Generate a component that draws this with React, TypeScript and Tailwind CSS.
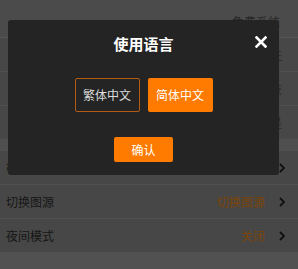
const font = "font-['Noto_Sans_CJK_SC','Noto_Sans',sans-serif]";

function Chevron() {
  return (
    <svg width="6" height="10" viewBox="0 0 6 10" className="shrink-0">
      <path d="M1 1l4 4-4 4" fill="none" stroke="#101010" strokeWidth="1.8" />
    </svg>
  );
}

function Row({ label, value, chevron = true, h = "h-[34px]" }: { label: string; value?: string; chevron?: boolean; h?: string }) {
  return (
    <div className={`${h} flex items-center justify-between pl-[6px] pr-[13px] bg-[#474747] border-b border-[#515151]`}>
      <span className="text-[12px] text-[#161616]">{label}</span>
      <div className="flex items-center gap-[14px]">
        {value && <span className="text-[12px] text-[#7c4406]">{value}</span>}
        {chevron && <Chevron />}
      </div>
    </div>
  );
}

export default function App() {
  return (
    <div className={`relative w-[298px] h-[269px] overflow-hidden bg-[#515151] ${font}`}>
      {/* settings list behind the dialog */}
      <div className="flex flex-col">
        <div className="h-[38px] flex items-start justify-end pt-[13px] pr-[18px] bg-[#4b4b4b] border-b border-[#555]">
          <span className="text-[12px] text-[#262626]">免费系统</span>
        </div>
        <div className="h-[34px] flex items-center justify-end pr-[16px] bg-[#474747] border-b border-[#515151]">
          <span className="text-[12px] text-[#2a2a2a]">已注</span>
        </div>
        <div className="h-[34px] flex items-center justify-end pr-[16px] bg-[#474747] border-b border-[#515151]">
          <span className="text-[12px] text-[#2a2a2a]">科技</span>
        </div>
        <div className="h-[34px] flex items-center justify-end pr-[16px] bg-[#474747] border-b border-[#515151]">
          <span className="text-[12px] text-[#2a2a2a]">总是</span>
        </div>
        <div className="h-[11px] bg-[#4f4f4f]" />
        <Row label="检查更新" />
        <Row label="切换图源" value="切换图源" />
        <Row label="夜间模式" value="关闭" />
      </div>

      {/* language dialog */}
      <div className="absolute left-[8px] top-[20px] w-[271px] h-[155px] rounded-[3px] bg-[#242424] flex flex-col items-center pt-[13px]">
        <div className="text-[15px] leading-[21px] font-bold text-white">使用语言</div>
        <button className="absolute left-[247px] top-[16px] w-[12px] h-[12px]">
          <svg width="12" height="12" viewBox="0 0 12 12">
            <path d="M1.5 1.5l9 9M10.5 1.5l-9 9" stroke="#fff" strokeWidth="2.6" strokeLinecap="square" />
          </svg>
        </button>
        <div className="mt-[24px] flex gap-[8px]">
          <button className="w-[65px] h-[34px] rounded-[2px] border border-[#b35d12] text-[12px] text-[#dcdcdc]">
            繁体中文
          </button>
          <button className="w-[65px] h-[34px] rounded-[2px] bg-[#ff7b00] text-[12px] text-white">
            简体中文
          </button>
        </div>
        <button className="mt-[25px] w-[59px] h-[25px] rounded-[2px] bg-[#ff7b00] text-[12px] text-white">
          确认
        </button>
      </div>
    </div>
  );
}
